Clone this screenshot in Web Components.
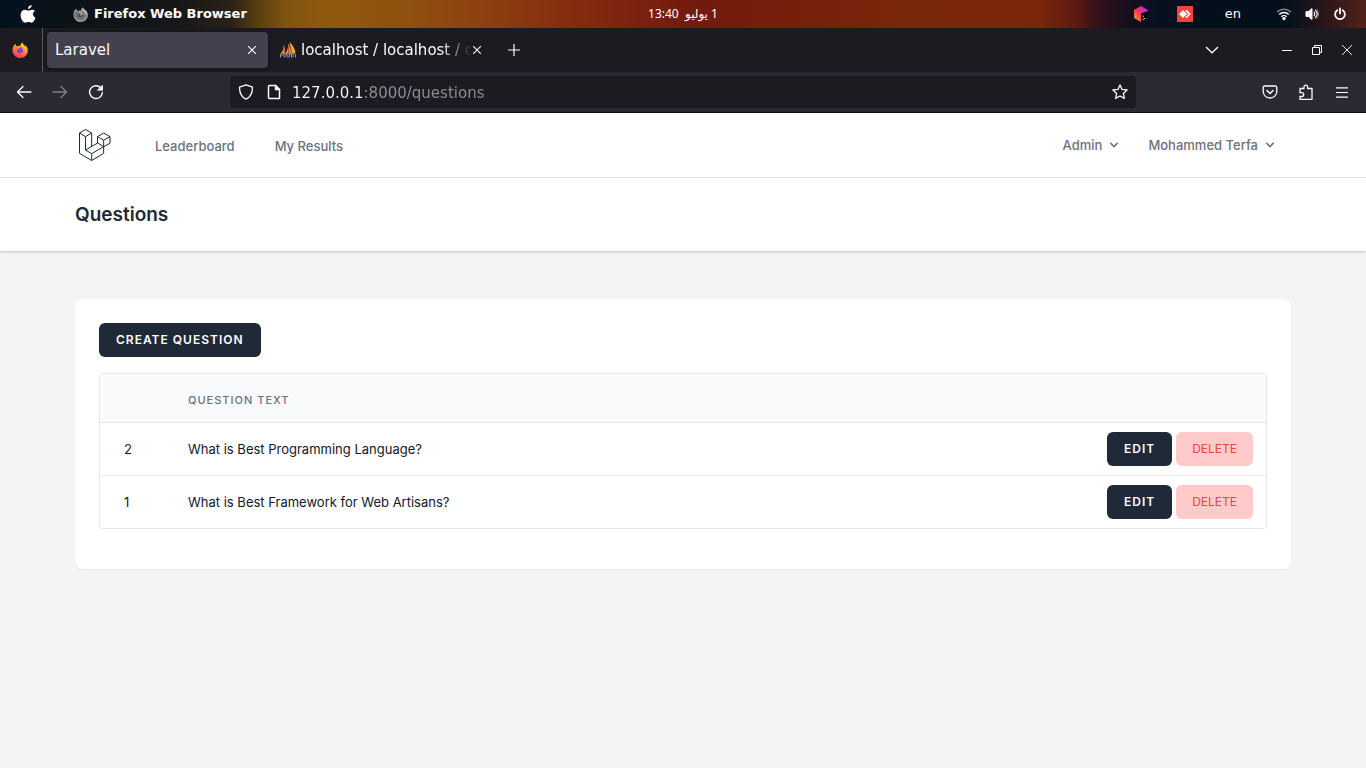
<!DOCTYPE html>
<html lang="en">
<head>
<meta charset="utf-8">
<meta name="viewport" content="width=device-width, initial-scale=1">
<title>Laravel</title>
<style>
  html, body { margin: 0; min-height: 100vh; background: #f3f4f6; }
  body { display: flex; flex-direction: column; font-family: Inter, sans-serif; font-size: 13px; line-height: 20px; color: #111827; }
</style>
</head>
<body>
<desktop-bar></desktop-bar>
<browser-tabs>
  <browser-tab active>Laravel</browser-tab>
  <browser-tab icon>localhost / localhost / questions</browser-tab>
</browser-tabs>
<browser-toolbar></browser-toolbar>
<site-nav>
  <nav-link href="#leaderboard">Leaderboard</nav-link>
  <nav-link href="#results">My Results</nav-link>
  <nav-menu slot="menus">Admin</nav-menu>
  <nav-menu slot="menus">Mohammed Terfa</nav-menu>
</site-nav>
<page-header>Questions</page-header>
<page-card>
  <ui-button href="#create">Create Question</ui-button>
  <question-table></question-table>
</page-card>

<script>
function define(name, css, html, setup) {
  const template = document.createElement('template');
  template.innerHTML = `<style>:host,*{box-sizing:border-box}button{font:inherit;color:inherit;background:none;border:0;padding:0;margin:0;cursor:pointer}a{text-decoration:none;color:inherit}svg{display:block;flex:none}${css}</style>${html}`;
  customElements.define(name, class extends HTMLElement {
    constructor() {
      super();
      this.attachShadow({ mode: 'open' }).append(template.content.cloneNode(true));
    }
    connectedCallback() { if (setup) setup(this, this.shadowRoot); }
  });
}

define('desktop-bar', `
  :host { display: block; height: 28px; color: #fff;
    background: linear-gradient(90deg, #03111d 0, #0b1218 5%, #171719 13%, #2a2218 17%, #5d400f 19%, #80550f 21%, #91590f 24%, #90500f 30%, #8d4210 35%, #852c10 42%, #721a0c 51%, #76200c 58%, #7a280c 67%, #7a260c 76%, #5a1a12 79%, #38121a 80%, #1c101c 82%, #0a1020 84%, #03101c 87%, #03101c 94%, #2a1518 97%, #54231a 100%); }
  .bar { display: grid; grid-template-columns: 1fr auto 1fr; height: 28px; align-items: center; padding: 0 18px; }
  .left, .right { display: flex; align-items: center; }
  .left { gap: 35px; }
  .app { display: flex; align-items: center; gap: 6px; font: bold 13px/20px "DejaVu Sans", sans-serif; }
  .clock { font: 12px/20px "Noto Sans", "DejaVu Sans", sans-serif; white-space: pre; }
  .right { justify-content: flex-end; gap: 12px; }
  .tray { display: flex; gap: 28px; align-items: center; padding-right: 20px; }
  .lang { font: 13px/20px "DejaVu Sans", sans-serif; padding-right: 23px; }
`, `
  <div class="bar">
    <div class="left">
      <button aria-label="System menu"><svg width="20" height="20" viewBox="0 0 20 20" fill="#fff"><path d="M13.7 1c.1 2-1.600 3.900-3.700 4-.2-2 1.600-3.900 3.700-4zM16.900 7.100c-2.800 1.800-2.300 5.400.600 6.700-.8 2.300-2.300 4.900-4 4.900-1.200 0-1.600-.7-3-.7s-1.900.7-3 .7C4.900 18.700 2.500 14.300 2.600 11c.1-3.200 2-5.200 4.300-5.200 1.400 0 2.400.8 3.500.8 1 0 2.200-.9 3.700-.9 1.200 0 2.200.5 2.800 1.400z"/></svg></button>
      <div class="app"><svg width="15" height="15" viewBox="0 0 16 16"><path d="M10.500.3C8.600 1.500 9 3 8 4c-1.500-.5-2.500-.3-3.200.2C3.500 3.600 3.800 2 3.600 1.700 1 3.600.1 6.500.6 9.500 1.500 13.500 4.500 16 8.300 16c4.200 0 7.500-3.200 7.500-7.200C15.800 6 14.500 4 13 3l.3 1.500C12 3 10.600 2.500 10.500.3z" fill="#999"/><path d="M1 7c1-3 4-3 6-1.500-1.500.5-2.500 2-1.500 3.500 1.500 2.500 5 1.500 5.500-1 .3-1.500-.5-3-1.500-4 4 1 5.500 5 3.500 8C10 16 2 15 1 7z" fill="#777"/><path d="M5 7.300c1.500-.1 1.700-.8 3-.9C6.800 7.500 7 8.500 8 9c1.700.6 2.700-1 2.200-2.600 1.700 1.700.8 5-2.200 5-2.200 0-3.600-2-3-4.100z" fill="#4d4d4d"/><path d="M11 1.500c0 2 3 3 3.500 6" stroke="#c8c8c8" fill="none" stroke-width="1.500"/></svg><span>Firefox Web Browser</span></div>
    </div>
    <time class="clock" dir="rtl">1 يوليو  13:40</time>
    <div class="right">
      <div class="tray">
        <svg width="16" height="16" viewBox="0 0 16 16"><defs><linearGradient id="t" x1="1" y1="0" x2="0" y2="1"><stop offset=".15" stop-color="#b22be0"/><stop offset=".5" stop-color="#ff2f63"/><stop offset=".9" stop-color="#ff8a24"/></linearGradient></defs><path d="M8 0l7 4v8l-7 4-7-4V4z" fill="url(#t)"/><path d="M8 7.500L15 5v7l-7 4z" fill="#050205"/><path d="M9.500 13.500l2.500-1.200M9.500 10l1.500.4" stroke="#ddd"/></svg>
        <svg width="16" height="16" viewBox="0 0 16 16"><path fill="#ef443b" d="M0 0h16v16H0z"/><path fill="#fff" d="M2 8l4-4 4 4-4 4zM8.400 5l1.200-1.200L13.800 8l-4.200 4.200L8.400 11l3-3z"/></svg>
      </div>
      <span class="lang">en</span>
      <svg width="16" height="14" viewBox="0 0 16 14" fill="none" stroke="#fff" stroke-width="1.400"><path d="M1 5.300C5 1.300 11 1.300 15 5.300" stroke="#777e83"/><path d="M3.200 7.500c2.600-2.700 7-2.700 9.600 0M5.300 9.700c1.500-1.500 3.900-1.500 5.400 0"/><circle cx="8" cy="11.500" r="1" fill="#fff"/></svg>
      <svg width="16" height="14" viewBox="0 0 16 14" fill="none" stroke="#fff"><path d="M2 4.500h2.500L8 1.500v11l-3.500-3H2z" fill="#fff"/><path d="M9.800 5c1.300 1.200 1.300 2.800 0 4M11 3c3 2.500 3 5.500 0 8" stroke-width="1.200"/><path d="M12.500 2c2.800 2.500 2.800 7.500 0 10" stroke="#777e83"/></svg>
      <svg width="16" height="14" viewBox="-1 0 16 14" fill="none" stroke="#fff" stroke-width="1.800" stroke-linecap="round"><path d="M4.300 3.200a4.900 4.900 0 1 0 5.400 0M7 1.500v5"/></svg>
    </div>
  </div>
`);

define('browser-tabs', `
  :host { display: flex; height: 44px; background: #1c1b22; color: #fbfbfe; align-items: center; }
  .view { width: 43px; height: 44px; border-right: 1px solid #5b5a60; display: flex; align-items: center; justify-content: center; padding-right: 3px; }
  .tabs { display: flex; gap: 4px; padding: 0 4px; }
  .new { width: 34px; height: 36px; display: grid; place-items: center; }
  .wm { margin-left: auto; display: flex; align-items: center; padding-right: 4px; }
  .wm button { width: 30px; height: 30px; display: grid; place-items: center; }
  .wm button:first-child { margin-right: 45px; }
`, `
  <button class="view" aria-label="Firefox View"><svg width="16" height="16" viewBox="0 0 16 16"><defs><linearGradient id="f" x1=".8" y1="0" x2=".3" y2="1"><stop stop-color="#fff34a"/><stop offset=".4" stop-color="#ff9a1f"/><stop offset="1" stop-color="#ff2a68"/></linearGradient></defs><path d="M10.500.3C8.600 1.500 9 3 8 4c-1.500-.5-2.500-.3-3.200.2C3.500 3.600 3.800 2 3.600 1.700 1 3.600.1 6.500.6 9.500 1.500 13.500 4.500 16 8.300 16c4.200 0 7.500-3.200 7.500-7.200C15.800 6 14.500 4 13 3l.3 1.500C12 3 10.600 2.500 10.500.3z" fill="url(#f)"/><path d="M5 7.300c1.500-.1 1.700-.8 3-.9C6.800 7.500 7 8.500 8 9c1.700.6 2.700-1 2.200-2.600 1.700 1.700.8 5-2.200 5-2.200 0-3.600-2-3-4.100z" fill="#7543d8"/><circle cx="8.600" cy="7.200" r="2" fill="#8a40e8"/></svg></button>
  <div class="tabs"><slot></slot></div>
  <button class="new" aria-label="New tab"><svg width="12" height="12" viewBox="0 0 12 12" stroke="#fbfbfe" stroke-width="1.200"><path d="M6 0v12M0 6h12"/></svg></button>
  <div class="wm">
    <button aria-label="List all tabs"><svg width="14" height="8" viewBox="0 0 14 8" fill="none" stroke="#fbfbfe" stroke-width="1.300"><path d="M1 1l6 5.800L13 1"/></svg></button>
    <button aria-label="Minimise"><svg width="10" height="1"><path d="M0 0h10v1H0z" fill="#fff"/></svg></button>
    <button aria-label="Restore"><svg width="10" height="10" viewBox="0 0 10 10" fill="none" stroke="#fff"><path d="M.5 2.500h7v7h-7zM2.500 2.500v-2h7v7h-2"/></svg></button>
    <button aria-label="Close window"><svg width="10" height="10" viewBox="0 0 10 10" stroke="#fff" stroke-width=".9"><path d="M0 0l10 10M10 0L0 10"/></svg></button>
  </div>
`);

define('browser-tab', `
  :host { display: flex; align-items: center; width: 221px; height: 36px; border-radius: 4px; padding: 0 11px 0 8px; font: 15px/20px "DejaVu Sans", sans-serif; }
  :host([active]) { background: #42414d; box-shadow: 0 0 4px #0008; }
  .icon { display: none; margin-right: 5px; }
  :host([icon]) .icon { display: block; }
  .label { flex: 1; min-width: 0; overflow: hidden; white-space: nowrap; }
  :host([icon]) .label { -webkit-mask-image: linear-gradient(to left, transparent 0, #000 32px); mask-image: linear-gradient(to left, transparent 0, #000 32px); }
  .close { display: grid; place-items: center; width: 10px; height: 20px; }
`, `
  <svg class="icon" width="16" height="16" viewBox="0 0 16 16"><path d="M3.500 2.500C4 6 3 9 .800 11l4 .5C5.500 8 5 5 3.500 2.500zM8 1.500c.5 4-.5 7-2.500 9.500h4.500C10.500 7 10 4 8 1.500z" fill="#f0902a"/><path d="M9.500 0c1 4 1 7 .7 11l5.300 0C15 7 13 3 9.500 0z" fill="#f7a13e"/><path d="M10.500 4l1 7M4 4v7M8.500 4v7" stroke="#7a4a1c" stroke-width=".7"/><path d="M.5 15.500V12l2 1.500L4 12v3.500M6 15.500V12l2 1.500v2M9.500 15.500V12h2v3.500M13 12v3.500M15.500 12v3.500M1 11.700h14" fill="none" stroke="#8d8fb5"/></svg>
  <span class="label"><slot></slot></span>
  <button class="close" aria-label="Close tab"><svg width="8" height="8" viewBox="0 0 8 8" stroke="#fbfbfe" stroke-width="1.100"><path d="M0 0l8 8M8 0L0 8"/></svg></button>
`);

define('browser-toolbar', `
  :host { display: flex; align-items: center; height: 41px; padding: 0 8px; background: #2b2a33; border-bottom: 1px solid #0c0c0d; color: #fbfbfe; }
  .group { display: flex; gap: 4px; }
  .group button { width: 32px; height: 32px; display: grid; place-items: center; }
  .off { opacity: .4; }
  .url { flex: 1; margin: 0 118px; height: 32px; border-radius: 4px; background: #1c1b22; display: flex; align-items: center; gap: 10px; padding: 0 8px; }
  .identity { display: flex; gap: 12px; }
  input { flex: 1; min-width: 0; border: 0; outline: 0; padding: 2px 0 0; height: 26px; font: 15px/24px "DejaVu Sans", sans-serif; color: #fbfbfe; -webkit-text-fill-color: transparent; background: linear-gradient(90deg, #fbfbfe 72px, #8f8f98 72px); -webkit-background-clip: text; background-clip: text; }
`, `
  <div class="group">
    <button aria-label="Back"><svg width="16" height="16" viewBox="0 0 16 16" fill="none" stroke="#fbfbfe" stroke-width="1.300" stroke-linecap="round" stroke-linejoin="round"><path d="M1.500 8H15M7 2.500L1.500 8 7 13.500"/></svg></button>
    <button class="off" aria-label="Forward" disabled><svg width="16" height="16" viewBox="0 0 16 16" fill="none" stroke="#fbfbfe" stroke-width="1.300" stroke-linecap="round" stroke-linejoin="round"><path d="M1 8h13.500M9 2.500L14.500 8 9 13.500"/></svg></button>
    <button aria-label="Reload"><svg width="16" height="16" viewBox="0 0 16 16" fill="none" stroke="#fbfbfe" stroke-width="1.400" stroke-linecap="round"><path d="M13.300 4.500A6.400 6.400 0 1 0 14.400 8.500"/><path d="M14.500 1.500v4.700H9.800z" fill="#fbfbfe" stroke-width=".8" stroke-linejoin="round"/></svg></button>
  </div>
  <div class="url">
    <div class="identity">
      <svg width="16" height="16" viewBox="0 0 16 16" fill="none" stroke="#fbfbfe" stroke-width="1.300" stroke-linejoin="round"><path d="M8 .8l6.500 2.400c0 5.500-1.500 9.800-6.500 12C3 13 1.500 8.700 1.500 3.200z"/></svg>
      <svg width="16" height="16" viewBox="0 0 16 16" fill="none" stroke="#fbfbfe" stroke-width="1.500" stroke-linejoin="round"><path d="M3.500 1.500h6l4 4v9h-10a1 1 0 0 1-1-1v-11a1 1 0 0 1 1-1z"/><path d="M9.500 1.500v4h4z" fill="#fbfbfe"/></svg>
    </div>
    <input type="text" aria-label="Address" value="127.0.0.1:8000/questions" spellcheck="false">
    <button aria-label="Bookmark this page"><svg width="16" height="16" viewBox="0 0 16 16" fill="none" stroke="#fbfbfe" stroke-width="1.300" stroke-linejoin="round"><path d="M8 .9l2.100 4.500 5 .6-3.700 3.400 1 5L8 12l-4.400 2.400 1-5L.9 6l5-.6z"/></svg></button>
  </div>
  <div class="group">
    <button aria-label="Save to Pocket"><svg width="16" height="16" viewBox="0 0 16 16" fill="none" stroke="#fbfbfe" stroke-width="1.300" stroke-linecap="round" stroke-linejoin="round"><path d="M2.500 2h11a1.300 1.300 0 0 1 1.300 1.300V7.500a6.800 6.500 0 0 1-13.600 0V3.300A1.300 1.300 0 0 1 2.500 2z"/><path d="M5 6.500l3 3 3-3" stroke-width="1.500"/></svg></button>
    <button aria-label="Extensions"><svg width="16" height="16" viewBox="0 0 16 16" fill="none" stroke="#fbfbfe" stroke-width="1.300" stroke-linejoin="round"><path d="M2 7V4.500h4V3a1.800 1.800 0 0 1 3.600 0v1.500H14V15.300H2V12.500h1.800a1.900 1.900 0 0 0 0-3.800H2z"/></svg></button>
    <button aria-label="Application menu"><svg width="12" height="11" viewBox="0 0 12 11" stroke="#fbfbfe" stroke-width="1.200"><path d="M0 .8h12M0 5.500h12M0 10.200h12"/></svg></button>
  </div>
`);

define('site-nav', `
  :host { display: block; background: #fff; border-bottom: 1px solid #e9ebee; }
  nav { display: flex; align-items: center; height: 64px; max-width: 1280px; margin: 0 auto; padding: 0 32px; }
  .logo { padding: 0 4px; margin-right: 40px; }
  .links { display: flex; gap: 40px; padding-top: 2px; }
  .menus { display: flex; gap: 26px; margin-left: auto; padding-right: 13px; }
`, `
  <nav>
    <a class="logo" href="#home" aria-label="Home"><svg width="32" height="32" viewBox="57 51 96 96" fill="none" stroke="#1f2937" stroke-width="3" stroke-linejoin="round"><path d="M76.500 52.500L95 63 76.500 74 58.500 63zM58.500 63v61L95 145.500 131 124v-20M76.500 74v40L95 125l36-21M95 63v40M95 125v20M76.500 114L113 93l18 11M131 63l19 11-19 10.500L112.500 74zM112.500 74v19M131 84.500V104M150 74v20l-19 10"/></svg></a>
    <div class="links"><slot></slot></div>
    <div class="menus"><slot name="menus"></slot></div>
  </nav>
`);

define('nav-link', `
  :host { display: block; color: #6b7280; font-weight: 500; }
`, `<a><slot></slot></a>`, (host, root) => { root.querySelector('a').href = host.getAttribute('href'); });

define('nav-menu', `
  :host { display: block; color: #6b7280; font-weight: 500; }
  button { display: flex; align-items: center; gap: 4px; }
`, `<button aria-haspopup="menu"><slot></slot><svg width="16" height="16" viewBox="0 0 20 20" fill="#6b7280"><path fill-rule="evenodd" d="M5.293 7.293a1 1 0 011.414 0L10 10.586l3.293-3.293a1 1 0 111.414 1.414l-4 4a1 1 0 01-1.414 0l-4-4a1 1 0 010-1.414z"/></svg></button>`);

define('page-header', `
  :host { display: block; background: #fff; box-shadow: 0 1px 3px #0000001a, 0 1px 2px #0000001a; }
  h2 { max-width: 1280px; margin: 0 auto; padding: 24px 32px; font-size: 19px; line-height: 25px; font-weight: 600; color: #1f2937; }
`, `<h2><slot></slot></h2>`);

define('page-card', `
  :host { display: block; padding: 48px 32px; max-width: 1280px; width: 100%; margin: 0 auto; }
  section { display: flex; flex-direction: column; align-items: flex-start; gap: 16px; padding: 24px 24px 40px; background: #fff; border-radius: 8px; box-shadow: 0 1px 2px #0000000d; }
`, `<section><slot></slot></section>`);

define('ui-button', `
  :host { display: inline-block; }
  a, button { display: block; border: 1px solid transparent; border-radius: 6px; padding: 8px 16px; font-size: 12px; line-height: 16px; text-transform: uppercase; white-space: nowrap; background: #1f2937; color: #fff; font-weight: 600; letter-spacing: 1px; }
  :host([danger]) button { padding: 8px 15px; background: #fecaca; color: #ef4444; font-weight: 400; letter-spacing: 0; }
`, ``, (host, root) => {
  if (root.querySelector('a, button')) return;
  const control = document.createElement(host.hasAttribute('href') ? 'a' : 'button');
  if (host.hasAttribute('href')) control.href = host.getAttribute('href');
  control.append(document.createElement('slot'));
  root.append(control);
});

define('question-table', `
  :host { display: block; width: 100%; border: 1px solid #e5e7eb; border-radius: 4px; overflow: hidden; }
  table { width: 100%; border-collapse: collapse; }
  th { height: 48px; padding: 4px 24px 0; background: #f9fafb; text-align: left; font-size: 11px; line-height: 16px; font-weight: 500; letter-spacing: 1px; color: #6b7280; text-transform: uppercase; }
  td { height: 53px; padding: 0 24px; border-top: 1px solid #e5e7eb; }
  .id { width: 64px; }
  .actions { width: 184px; padding: 0 13px 0 24px; }
  .row { display: flex; justify-content: flex-end; gap: 4px; }
`, `
  <table>
    <thead><tr><th class="id" aria-label="ID"></th><th>Question text</th><th class="actions" aria-label="Actions"></th></tr></thead>
    <tbody></tbody>
  </table>
`, (host, root) => {
  const questions = [[2, 'What is Best Programming Language?'], [1, 'What is Best Framework for Web Artisans?']];
  root.querySelector('tbody').innerHTML = questions.map(([id, text]) => `
    <tr><td class="id">${id}</td><td>${text}</td><td class="actions"><div class="row"><ui-button href="#edit-${id}">Edit</ui-button><ui-button danger>Delete</ui-button></div></td></tr>`).join('');
});
</script>
</body>
</html>
